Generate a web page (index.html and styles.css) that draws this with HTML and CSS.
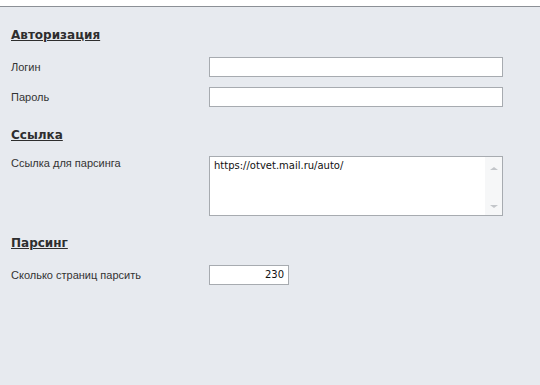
FILE: index.html
```html
<!DOCTYPE html>
<html>
<head>
  <meta charset="UTF-8" />
  <title>Настройки парсера</title>
  <link rel="stylesheet" href="styles.css">
</head>
<body>
  <!-- Top strip -->
  <div id="topStrip"></div>

  <div id="settings">
    <!-- Авторизация -->
    <div class="section-title first">Авторизация</div>
    <div class="field-row">
      <div class="field-label">Логин</div>
      <div class="text-input"></div>
    </div>
    <div class="field-row">
      <div class="field-label">Пароль</div>
      <div class="text-input"></div>
    </div>

    <!-- Ссылка -->
    <div class="section-title">Ссылка</div>
    <div class="field-row top">
      <div class="field-label">Ссылка для парсинга</div>
      <div class="memo">
        <div class="memo-text">https://otvet.mail.ru/auto/</div>
        <div class="memo-scroll">
          <span class="arrow up"></span>
          <span class="arrow down"></span>
        </div>
      </div>
    </div>

    <!-- Парсинг -->
    <div class="section-title last">Парсинг</div>
    <div class="field-row">
      <div class="field-label">Сколько страниц парсить</div>
      <div class="text-input number">230</div>
    </div>
  </div>
</body>
</html>
```

FILE: styles.css
```css
/* Global reset & fonts */
* {
  margin: 0;
  padding: 0;
  box-sizing: border-box;
}
body {
  font-family: Tahoma, 'DejaVu Sans', sans-serif;
  font-size: 11px;
  background-color: #e7eaef;
  color: #333333;
  height: 100vh;
}

/* Top white strip */
#topStrip {
  height: 7px;
  background-color: #ffffff;
  border-bottom: 1px solid #8c9096;
}

/* Settings panel */
#settings {
  padding: 0 0 0 11px;
}
.section-title {
  font-size: 12px;
  font-weight: bold;
  color: #2e2e2e;
  text-decoration: underline;
  line-height: 14px;
  margin-top: 21px;
  margin-bottom: 14px;
}
.section-title.first {
  margin-top: 21px;
  margin-bottom: 15px;
}
.section-title.last {
  margin-top: 20px;
  margin-bottom: 15px;
}

.field-row {
  display: flex;
  align-items: center;
  margin-bottom: 10px;
}
.field-row.top {
  align-items: flex-start;
}
.field-row.top .field-label {
  padding-top: 1px;
}
.field-label {
  width: 198px;
  font-family: 'Liberation Sans', Arial, sans-serif;
  font-size: 11px;
  color: #333333;
}
.text-input {
  width: 294px;
  height: 20px;
  background-color: #ffffff;
  border: 1px solid #a7abb0;
}
.text-input.number {
  width: 80px;
  text-align: right;
  padding: 3px 4px 0 0;
  font-family: 'DejaVu Sans', sans-serif;
  font-size: 10px;
  color: #111111;
}

/* Multiline box */
.memo {
  width: 294px;
  height: 60px;
  background-color: #ffffff;
  border: 1px solid #a7abb0;
  display: flex;
}
.memo-text {
  flex: 1;
  padding: 3px 4px;
  font-family: 'DejaVu Sans', sans-serif;
  font-size: 10px;
  color: #111111;
}
.memo-scroll {
  width: 17px;
  background-color: #f6f7f8;
  display: flex;
  flex-direction: column;
  justify-content: space-between;
  align-items: center;
  padding: 10px 0 7px;
}
.arrow {
  width: 0;
  height: 0;
  border-left: 4px solid transparent;
  border-right: 4px solid transparent;
}
.arrow.up {
  border-bottom: 3px solid #c3c6ca;
}
.arrow.down {
  border-top: 3px solid #c3c6ca;
}
```
